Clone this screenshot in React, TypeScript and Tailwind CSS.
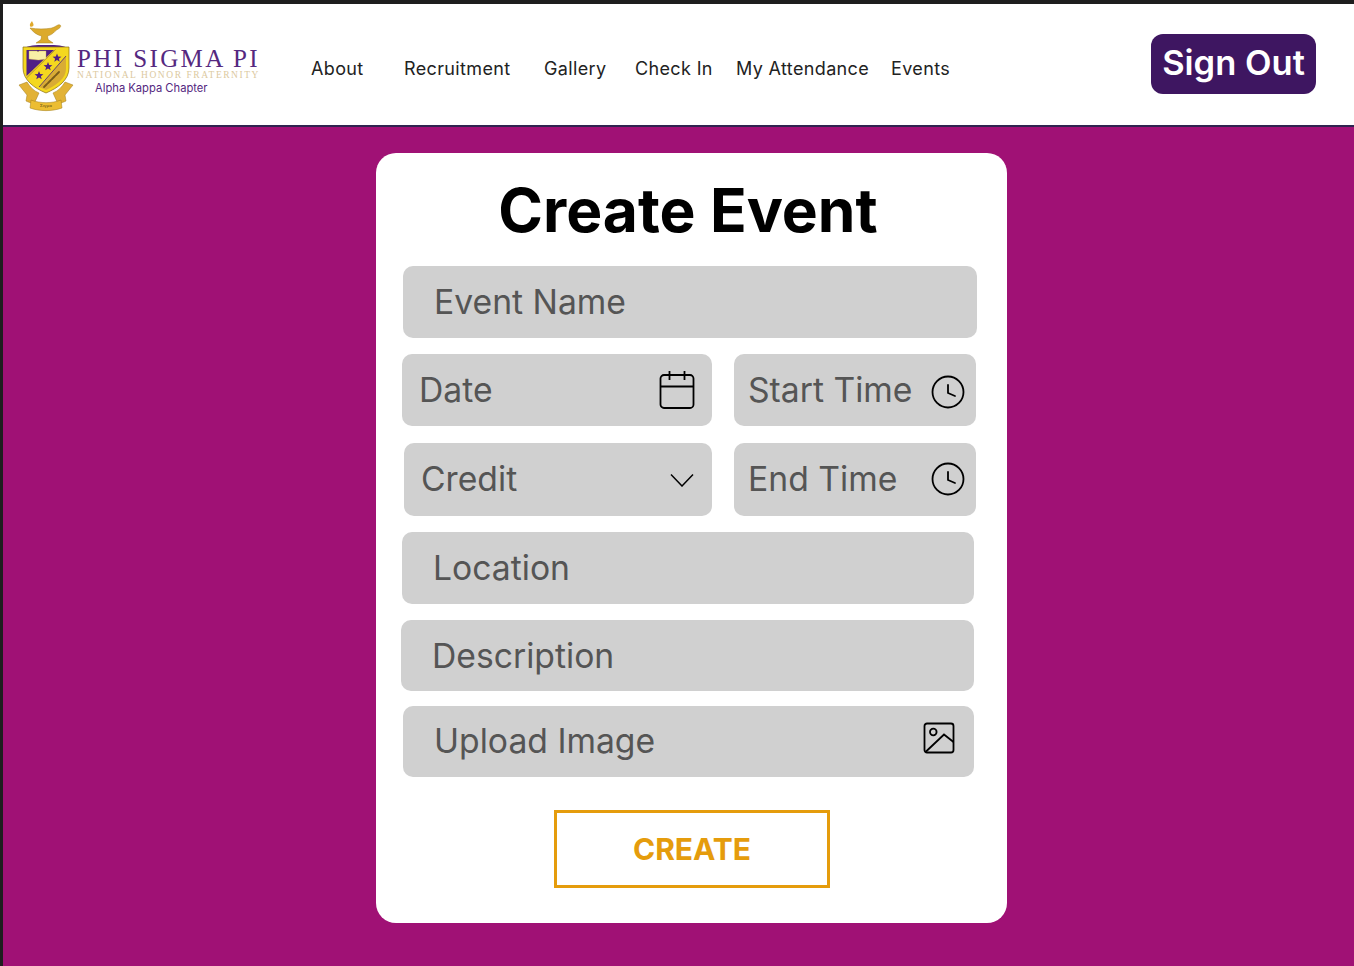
import type { ReactNode } from "react";

const inter = "font-['Inter',sans-serif]";

function Crest() {
  return (
    <svg width="56" height="92" viewBox="18 20 56 92" className="shrink-0">
      {/* lamp */}
      <path d="M32 21c-1.500 2-2.800 3.500-1.800 5.500 1.800.8 3.600-.3 3.300-2-.2-1.300-1-2.200-1.500-3.500z" fill="#e0a92c" />
      <path d="M30 28c7 1.200 15 1.200 21 .2 3-.6 5-2.400 7-3.200 2.500-.8 3.500 1 2 2.600-1.800 1.800-3.500 2.200-5 3.700-2 2.600-5 4-7.500 4.700l.6 3.600 5 3.400H36l5-3.400.6-3.600c-5-1-9-4.500-11.600-8z" fill="#dcaa2c" stroke="#a98018" strokeWidth="0.5" />
      <path d="M24 48c5-2.500 10-3 22-3s17 .5 22 3l-2 .8H26z" fill="#4f1f86" />
      {/* shield */}
      <path d="M23 47h46v21c0 12-11 20-23 25-12-5-23-13-23-25z" fill="#f4d81f" stroke="#8a6d16" strokeWidth="0.7" />
      <path d="M26.500 50H54L26.500 76z" fill="#4f1f86" />
      <path d="M66 56v13c0 9-9 16-20 21l-7-3z" fill="#d9ac35" />
      <path d="M66 56 39 87" stroke="#5a3a70" strokeWidth="0.9" fill="none" />
      <path d="M55.500 49.500 26.500 78" stroke="#a98a3a" strokeWidth="0.9" fill="none" />
      <path d="M29 51h8l1 1 1-1h7v8l-7 1h-1l-9-1z" fill="#f8efa6" stroke="#c9b14f" strokeWidth="0.4" />
      <path d="M57 53.500l1.200 3 3.200.2-2.500 2 .8 3.100-2.700-1.700-2.700 1.700.8-3.100-2.500-2 3.200-.2zM48 62l1.200 3 3.200.2-2.500 2 .8 3.100-2.700-1.700-2.700 1.700.8-3.100-2.500-2 3.200-.2zM39 71l1.200 3 3.200.2-2.500 2 .8 3.100-2.700-1.700-2.700 1.700.8-3.100-2.500-2 3.200-.2z" fill="#4f1f86" />
      <path d="M44 87l3-3M48 83l3-3M52 79l3-3M56 75l3-3" stroke="#7a5c18" strokeWidth="1.800" fill="none" strokeLinecap="round" />
      {/* scrolls */}
      <path d="M19 85l8-3c3 5 7 9 12 11l-5 11c-3-1-6-2-8-3l1-6z" fill="#e2b236" stroke="#a07c1a" strokeWidth="0.5" />
      <path d="M73 85l-8-3c-3 5-7 9-12 11l5 11c3-1 6-2 8-3l-1-6z" fill="#e2b236" stroke="#a07c1a" strokeWidth="0.5" />
      <path d="M31 100c9 3.500 21 3.500 30 0l1 8c-10 3.500-22 3.500-32 0z" fill="#ecbd32" stroke="#a07c1a" strokeWidth="0.5" />
      <text x="46" y="107" textAnchor="middle" fontSize="5" fill="#5b4510" fontFamily="Liberation Serif, serif">Σιγμα</text>
    </svg>
  );
}

function Field({
  label,
  icon,
  className,
  textClass = "pl-[31px]",
}: {
  label: string;
  icon?: ReactNode;
  className: string;
  textClass?: string;
}) {
  return (
    <div className={`flex items-center justify-between rounded-[10px] bg-[#d0d0d0] ${className}`}>
      <span className={`text-[33.700px] leading-none text-[#555555] ${inter} ${textClass}`}>{label}</span>
      {icon}
    </div>
  );
}

function ClockIcon({ className }: { className: string }) {
  return (
    <svg width="34" height="34" viewBox="0 0 34 34" fill="none" stroke="black" strokeWidth="1.800" strokeLinecap="round" className={className}>
      <circle cx="17" cy="17" r="15.500" />
      <path d="M17 10v8l7 3" />
    </svg>
  );
}

export default function App() {
  return (
    <div className="min-h-[966px] border-l-[3px] border-t-4 border-[#1e1e1e] bg-[#a01175]">
      <header className={`flex h-[123px] items-center border-b-2 border-[#2f2450] bg-white ${inter}`}>
        <div className="ml-[15px] mt-[3px] flex items-start">
          <Crest />
          <div className="ml-[3px] mt-[26px] flex w-[190px] flex-col">
            <span className="whitespace-nowrap font-['Liberation_Serif',serif] text-[25px] leading-[26px] tracking-[2.400px] text-[#55287f]">PHI SIGMA PI</span>
            <span className="-mt-[2px] whitespace-nowrap font-['Liberation_Serif',serif] text-[9.500px] leading-[10px] tracking-[1.550px] text-[#dcc9a0]">NATIONAL HONOR FRATERNITY</span>
            <span className="ml-[18px] mt-[1px] whitespace-nowrap text-[11.200px] leading-[15px] text-[#55287f]">Alpha Kappa Chapter</span>
          </div>
        </div>
        <nav className="ml-[44px] mt-[7px] flex text-[18px] tracking-[0.36px] text-[#222]">
          <a className="w-[93px]">About</a>
          <a className="w-[140px]">Recruitment</a>
          <a className="w-[91px]">Gallery</a>
          <a className="w-[101px]">Check In</a>
          <a className="w-[155px]">My Attendance</a>
          <a>Events</a>
        </nav>
        <button className="ml-auto mr-[38px] -mt-[1px] flex h-[60px] w-[165px] items-center justify-center rounded-[12px] bg-[#3e1661] pb-[2px] text-[34.500px] font-semibold text-white">
          Sign Out
        </button>
      </header>
      <main className="pb-[43px] pt-[26px]">
        <div className={`ml-[373px] flex h-[770px] w-[631px] flex-col rounded-[20px] bg-white ${inter}`}>
          <h1 className="mt-[21px] pr-[7px] text-center text-[60.500px] font-bold leading-[72px] text-black">Create Event</h1>
          <Field label="Event Name" className="ml-[27px] mt-[20px] h-[72px] w-[574px]" />
          <div className="ml-[26px] mt-[16px] flex h-[72px]">
            <Field
              label="Date"
              textClass="pl-[17px]"
              className="w-[310px]"
              icon={
                <svg width="36" height="40" viewBox="0 0 36 40" fill="none" stroke="black" strokeWidth="1.800" className="mr-[17px]">
                  <rect x="1.500" y="5" width="33" height="33" rx="3.500" />
                  <path d="M1.500 16.500h33M10.500 1v9M25.500 1v9" />
                </svg>
              }
            />
            <Field
              label="Start Time"
              textClass="pl-[14px]"
              className="ml-[22px] w-[242px]"
              icon={<ClockIcon className="mr-[11px] mt-[3px]" />}
            />
          </div>
          <div className="ml-[28px] mt-[17px] flex h-[73px]">
            <Field
              label="Credit"
              textClass="pb-[2px] pl-[17px]"
              className="w-[308px]"
              icon={
                <svg width="24" height="14" viewBox="0 0 24 14" fill="none" stroke="black" strokeWidth="1.500" className="mr-[18px]">
                  <path d="M1 1.500 12 13 23 1.500" />
                </svg>
              }
            />
            <Field
              label="End Time"
              textClass="pb-[2px] pl-[14px]"
              className="ml-[22px] w-[242px]"
              icon={<ClockIcon className="mb-[2px] mr-[11px]" />}
            />
          </div>
          <Field label="Location" className="ml-[26px] mt-[16px] h-[72px] w-[572px]" />
          <Field label="Description" className="ml-[25px] mt-[16px] h-[71px] w-[573px]" />
          <Field
            label="Upload Image"
            textClass="pb-[2px] pl-[31px]"
            className="ml-[27px] mt-[15px] h-[71px] w-[571px]"
            icon={
              <svg width="32" height="32" viewBox="0 0 32 32" fill="none" stroke="black" strokeWidth="1.800" className="mb-[7px] mr-[19px]">
                <rect x="1.500" y="1.500" width="29" height="29" rx="2.500" />
                <circle cx="10.300" cy="10" r="3.300" />
                <path d="M2.500 30 21 12.500l9.500 7.500" />
              </svg>
            }
          />
          <button className="ml-[178px] mt-[33px] h-[78px] w-[276px] border-[3px] border-[#e59c0c] bg-white text-[30px] font-bold text-[#e59c0c]">
            CREATE
          </button>
        </div>
      </main>
    </div>
  );
}
